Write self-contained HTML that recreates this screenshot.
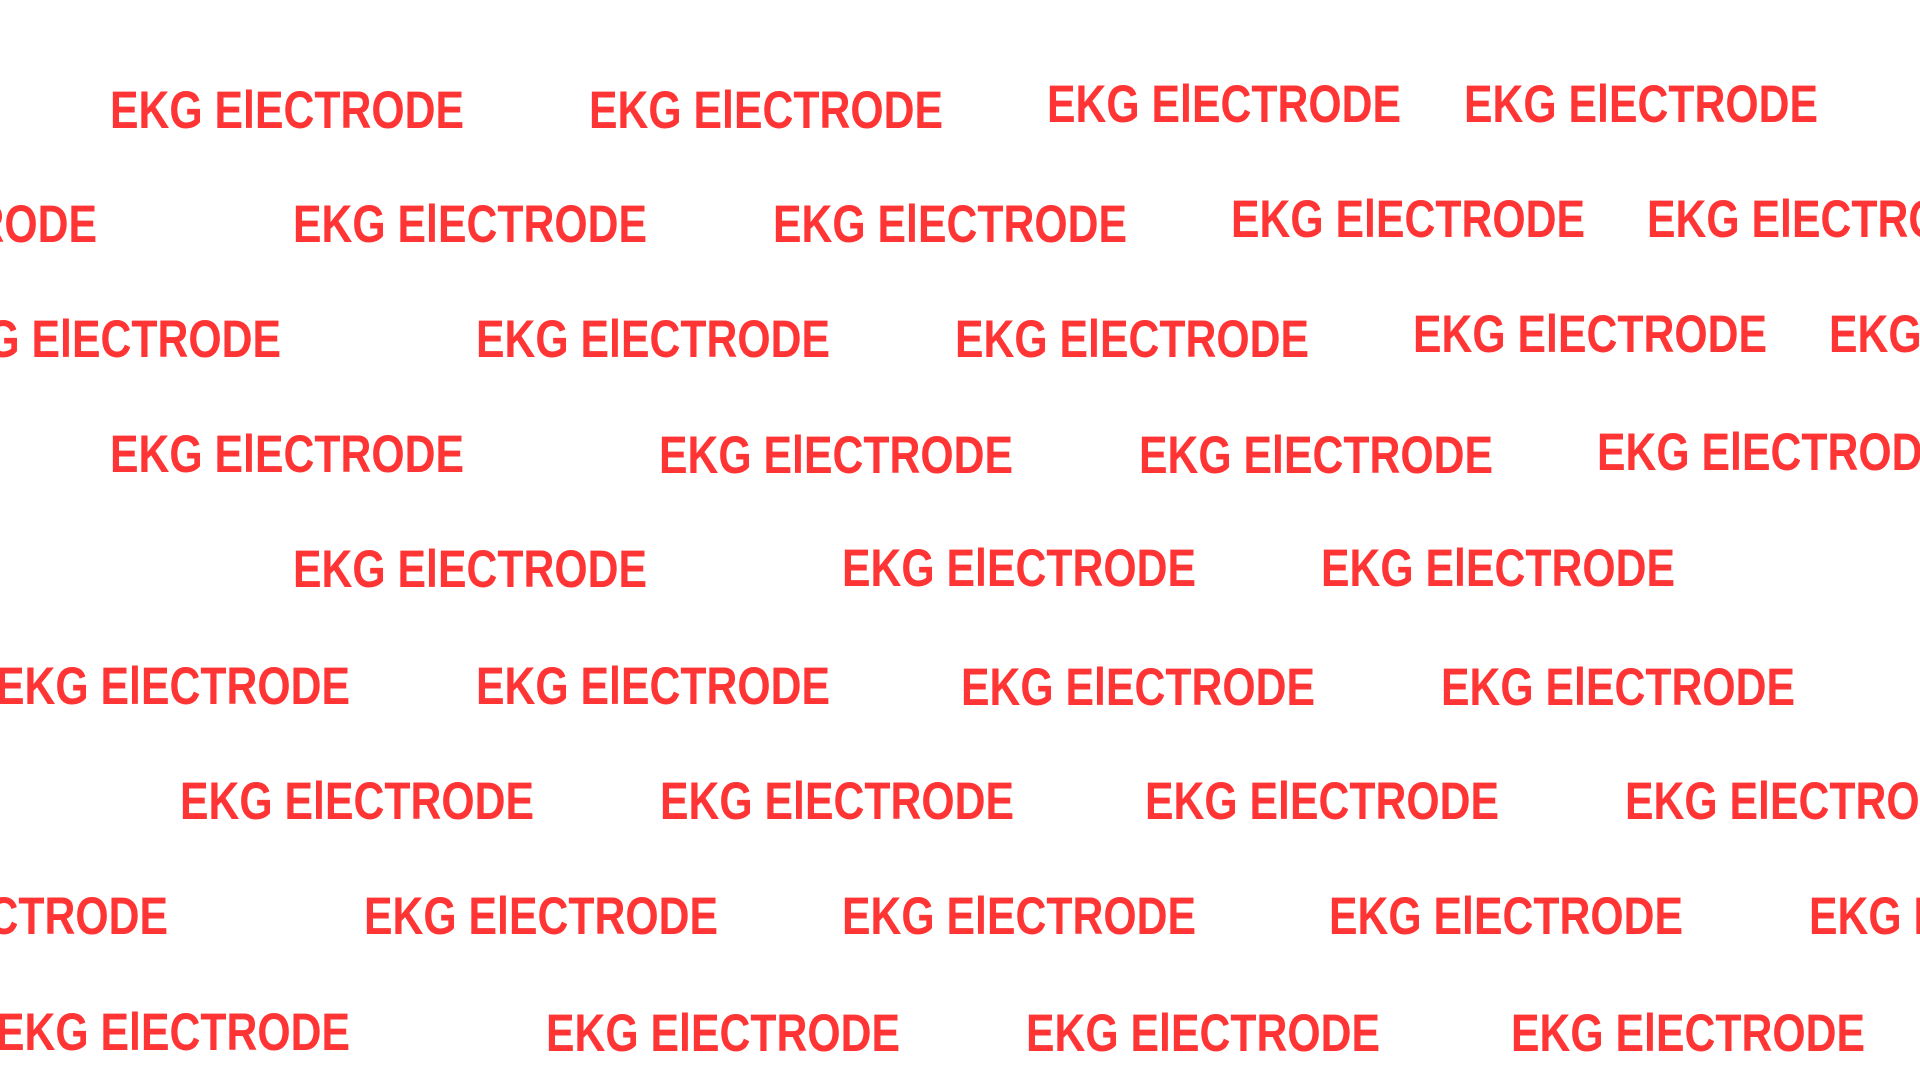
<!DOCTYPE html>
<html><head><meta charset="utf-8"><style>
html,body{margin:0;padding:0;background:#fff;width:1920px;height:1080px;overflow:hidden}
svg text{font-family:"Liberation Sans",sans-serif;font-weight:bold;font-size:53px;fill:#ff3535}
</style></head><body>
<svg width="1920" height="1080" xmlns="http://www.w3.org/2000/svg">
<g transform="translate(0,-1)">
<text x="110" y="129" textLength="354" lengthAdjust="spacingAndGlyphs">EKG ElECTRODE</text>
<text x="589" y="129" textLength="354" lengthAdjust="spacingAndGlyphs">EKG ElECTRODE</text>
<text x="1047" y="123" textLength="354" lengthAdjust="spacingAndGlyphs">EKG ElECTRODE</text>
<text x="1464" y="123" textLength="354" lengthAdjust="spacingAndGlyphs">EKG ElECTRODE</text>

<text x="-257" y="243" textLength="354" lengthAdjust="spacingAndGlyphs">EKG ElECTRODE</text>
<text x="293" y="243" textLength="354" lengthAdjust="spacingAndGlyphs">EKG ElECTRODE</text>
<text x="773" y="243" textLength="354" lengthAdjust="spacingAndGlyphs">EKG ElECTRODE</text>
<text x="1231" y="238" textLength="354" lengthAdjust="spacingAndGlyphs">EKG ElECTRODE</text>
<text x="1647" y="238" textLength="354" lengthAdjust="spacingAndGlyphs">EKG ElECTRODE</text>

<text x="-73" y="358" textLength="354" lengthAdjust="spacingAndGlyphs">EKG ElECTRODE</text>
<text x="476" y="358" textLength="354" lengthAdjust="spacingAndGlyphs">EKG ElECTRODE</text>
<text x="955" y="358" textLength="354" lengthAdjust="spacingAndGlyphs">EKG ElECTRODE</text>
<text x="1413" y="353" textLength="354" lengthAdjust="spacingAndGlyphs">EKG ElECTRODE</text>
<text x="1829" y="353" textLength="354" lengthAdjust="spacingAndGlyphs">EKG ElECTRODE</text>

<text x="110" y="473" textLength="354" lengthAdjust="spacingAndGlyphs">EKG ElECTRODE</text>
<text x="659" y="474" textLength="354" lengthAdjust="spacingAndGlyphs">EKG ElECTRODE</text>
<text x="1139" y="474" textLength="354" lengthAdjust="spacingAndGlyphs">EKG ElECTRODE</text>
<text x="1597" y="471" textLength="354" lengthAdjust="spacingAndGlyphs">EKG ElECTRODE</text>

<text x="293" y="588" textLength="354" lengthAdjust="spacingAndGlyphs">EKG ElECTRODE</text>
<text x="842" y="587" textLength="354" lengthAdjust="spacingAndGlyphs">EKG ElECTRODE</text>
<text x="1321" y="587" textLength="354" lengthAdjust="spacingAndGlyphs">EKG ElECTRODE</text>

<text x="-4" y="705" textLength="354" lengthAdjust="spacingAndGlyphs">EKG ElECTRODE</text>
<text x="476" y="705" textLength="354" lengthAdjust="spacingAndGlyphs">EKG ElECTRODE</text>
<text x="961" y="706" textLength="354" lengthAdjust="spacingAndGlyphs">EKG ElECTRODE</text>
<text x="1441" y="706" textLength="354" lengthAdjust="spacingAndGlyphs">EKG ElECTRODE</text>

<text x="180" y="820" textLength="354" lengthAdjust="spacingAndGlyphs">EKG ElECTRODE</text>
<text x="660" y="820" textLength="354" lengthAdjust="spacingAndGlyphs">EKG ElECTRODE</text>
<text x="1145" y="820" textLength="354" lengthAdjust="spacingAndGlyphs">EKG ElECTRODE</text>
<text x="1625" y="820" textLength="354" lengthAdjust="spacingAndGlyphs">EKG ElECTRODE</text>

<text x="-186" y="935" textLength="354" lengthAdjust="spacingAndGlyphs">EKG ElECTRODE</text>
<text x="364" y="935" textLength="354" lengthAdjust="spacingAndGlyphs">EKG ElECTRODE</text>
<text x="842" y="935" textLength="354" lengthAdjust="spacingAndGlyphs">EKG ElECTRODE</text>
<text x="1329" y="935" textLength="354" lengthAdjust="spacingAndGlyphs">EKG ElECTRODE</text>
<text x="1809" y="935" textLength="354" lengthAdjust="spacingAndGlyphs">EKG ElECTRODE</text>

<text x="-4" y="1051" textLength="354" lengthAdjust="spacingAndGlyphs">EKG ElECTRODE</text>
<text x="546" y="1052" textLength="354" lengthAdjust="spacingAndGlyphs">EKG ElECTRODE</text>
<text x="1026" y="1052" textLength="354" lengthAdjust="spacingAndGlyphs">EKG ElECTRODE</text>
<text x="1511" y="1052" textLength="354" lengthAdjust="spacingAndGlyphs">EKG ElECTRODE</text>
</g>
</svg>
</body></html>
